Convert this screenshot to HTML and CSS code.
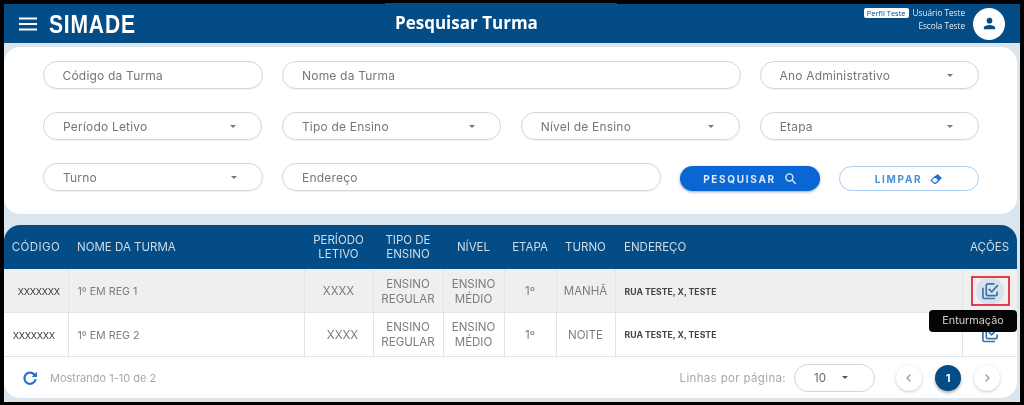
FILE: index.html
```html
<!DOCTYPE html>
<html lang="pt-BR">
<head>
<meta charset="utf-8">
<title>Pesquisar Turma</title>
<link rel="stylesheet" href="styles.css">
</head>
<body>
<div class="app">
  <header class="topbar">
    <div class="brand">
      <svg class="menu" viewBox="0 0 18 14"><path d="M0 1.5h18M0 7h18M0 12.5h18"/></svg>
      <span class="logo">SIMADE</span>
    </div>
    <h1 class="title">Pesquisar Turma</h1>
    <div class="user">
      <div class="user-text">
        <div class="user-line"><span class="badge">Perfil Teste</span><span>Usuário Teste</span></div>
        <div class="user-line">Escola Teste</div>
      </div>
      <div class="avatar">
        <svg viewBox="0 0 24 24"><path d="M12 12a4 4 0 1 0 0-8 4 4 0 0 0 0 8zm0 2c-2.7 0-8 1.3-8 4v2h16v-2c0-2.7-5.3-4-8-4z"/></svg>
      </div>
    </div>
  </header>

  <main class="content">
    <section class="filters">
      <div class="row row-a">
        <div class="field">Código da Turma</div>
        <div class="field">Nome da Turma</div>
        <div class="field">Ano Administrativo<i class="caret"></i></div>
      </div>
      <div class="row row-b">
        <div class="field">Período Letivo<i class="caret"></i></div>
        <div class="field">Tipo de Ensino<i class="caret"></i></div>
        <div class="field">Nível de Ensino<i class="caret"></i></div>
        <div class="field">Etapa<i class="caret"></i></div>
      </div>
      <div class="row row-c">
        <div class="field">Turno<i class="caret"></i></div>
        <div class="field">Endereço</div>
        <button class="btn btn-primary">PESQUISAR
          <svg viewBox="0 0 24 24"><circle cx="10" cy="10" r="6.5"/><path d="M15 15l6.5 6.5"/></svg>
        </button>
        <button class="btn btn-outline">LIMPAR
          <svg viewBox="0 0 24 24"><path class="eraser" d="M14 3.5l8 7.5-8.5 9-8-7.5z"/><path class="eraser-tip" d="M9.5 8L2 15.5l6.5 5.5h2l5.5-6z"/></svg>
        </button>
      </div>
    </section>

    <section class="results">
      <table class="grid">
        <colgroup>
          <col class="c-code"><col class="c-name"><col class="c-period"><col class="c-type">
          <col class="c-level"><col class="c-stage"><col class="c-shift"><col class="c-addr"><col class="c-act">
        </colgroup>
        <thead>
          <tr>
            <th>CÓDIGO</th>
            <th class="left">NOME DA TURMA</th>
            <th>PERÍODO<br>LETIVO</th>
            <th>TIPO DE<br>ENSINO</th>
            <th>NÍVEL</th>
            <th>ETAPA</th>
            <th>TURNO</th>
            <th class="left">ENDEREÇO</th>
            <th>AÇÕES</th>
          </tr>
        </thead>
        <tbody>
          <tr class="shaded">
            <td class="code">XXXXXXX</td>
            <td class="left">1º EM REG 1</td>
            <td>XXXX</td>
            <td>ENSINO<br>REGULAR</td>
            <td>ENSINO<br>MÉDIO</td>
            <td>1º</td>
            <td>MANHÃ</td>
            <td class="left addr">RUA TESTE, X, TESTE</td>
            <td class="actions">
              <span class="act-btn hovered">
                <svg viewBox="0 0 24 24"><path d="M3.5 8v11a2 2 0 0 0 2 2H18"/><path d="M20.5 12.5v3a2 2 0 0 1-2 2H9.5a2 2 0 0 1-2-2v-10a2 2 0 0 1 2-2h8"/><path d="M10.5 9.5l3.5 3.5 7.5-8"/></svg>
              </span>
              <span class="focus-box"></span>
              <span class="tooltip">Enturmação</span>
            </td>
          </tr>
          <tr>
            <td class="code shift-left">XXXXXXX</td>
            <td class="left">1º EM REG 2</td>
            <td class="shift-right">XXXX</td>
            <td>ENSINO<br>REGULAR</td>
            <td>ENSINO<br>MÉDIO</td>
            <td>1º</td>
            <td>NOITE</td>
            <td class="left addr">RUA TESTE, X, TESTE</td>
            <td class="actions">
              <span class="act-btn">
                <svg viewBox="0 0 24 24"><path d="M3.5 8v11a2 2 0 0 0 2 2H18"/><path d="M20.5 12.5v3a2 2 0 0 1-2 2H9.5a2 2 0 0 1-2-2v-10a2 2 0 0 1 2-2h8"/><path d="M10.5 9.5l3.5 3.5 7.5-8"/></svg>
              </span>
            </td>
          </tr>
        </tbody>
      </table>
      <footer class="pager">
        <div class="pager-left">
          <svg class="refresh" viewBox="0 0 24 24"><path d="M19.5 8A8.5 8.5 0 1 0 20.5 14"/><path class="fill" d="M22.5 2.5v8h-8z"/></svg>
          <span>Mostrando 1-10 de 2</span>
        </div>
        <div class="pager-right">
          <span>Linhas por página:</span>
          <div class="size">10<i class="caret dark"></i></div>
          <div class="pages">
            <span class="page nav"><svg viewBox="0 0 12 12"><path d="M7.5 2.5L4 6l3.5 3.5"/></svg></span>
            <span class="page current">1</span>
            <span class="page nav"><svg viewBox="0 0 12 12"><path d="M4.5 2.5L8 6l-3.5 3.5"/></svg></span>
          </div>
        </div>
      </footer>
    </section>
  </main>
</div>
</body>
</html>
```
FILE: styles.css
```css
* { box-sizing: border-box; }
html, body { margin: 0; height: 100%; }
body { background: #000; overflow: hidden; font-family: "Inter", "Liberation Sans", sans-serif; }

.app {
  width: 1016px;
  height: 398px;
  margin: 4px 0 0 4px;
  background: #dbe5ed;
  display: flex;
  flex-direction: column;
  filter: blur(0.6px);
}

/* top bar */
.topbar {
  height: 39px;
  flex: none;
  background: #034c85;
  color: #fff;
  display: flex;
  align-items: center;
  padding: 0 15px;
  position: relative;
}
.topbar::before {
  content: "";
  position: absolute;
  left: 381px;
  top: -1px;
  width: 232px;
  height: 1px;
  background: #034c85;
}
.brand { display: flex; align-items: center; width: 376px; flex: none; }
.menu { width: 18px; height: 14px; fill: none; stroke: #fff; stroke-width: 1.8; }
.logo {
  display: inline-block;
  margin-left: 12px;
  font: 700 26px/1 "Liberation Sans", sans-serif;
  letter-spacing: 1px;
  transform: scaleX(.81);
  transform-origin: left center;
}
.title {
  margin: 0 0 2px;
  font: 700 17px/1 "Open Sans", sans-serif;
  white-space: nowrap;
}
.user { margin-left: auto; display: flex; align-items: center; gap: 8px; }
.user-text { font: 400 8.2px/1 "Open Sans", sans-serif; text-align: right; color: #e6eef5; padding-bottom: 8px; }
.user-line { display: flex; justify-content: flex-end; align-items: center; gap: 4px; height: 13.5px; }
.badge {
  background: #fff;
  color: #034c85;
  padding: 1px 3px;
  border-radius: 2px;
  font-size: 7.5px;
  line-height: 8px;
}
.avatar {
  width: 32px;
  height: 32px;
  border-radius: 50%;
  background: #fff;
  display: flex;
  align-items: center;
  justify-content: center;
}
.avatar svg { width: 17px; height: 17px; fill: #034c85; }

/* content */
.content { flex: 1; display: flex; flex-direction: column; gap: 11px; padding-top: 4px; }

.filters {
  height: 167px;
  flex: none;
  margin-right: 3px;
  background: #fff;
  border-radius: 16px;
  padding: 14px 38px 0 39px;
  display: flex;
  flex-direction: column;
  gap: 23px;
}
.row { display: grid; column-gap: 19.5px; height: 28px; }
.row-a { grid-template-columns: 220px 458px 219px; }
.row-b { grid-template-columns: repeat(4, 1fr); }
.row-c { grid-template-columns: 220px 379px 140px 140px; column-gap: 19px; }

.field {
  border: 1px solid #d4d6d8;
  border-radius: 14px;
  box-shadow: 0 1px 1px rgba(0, 0, 0, .06);
  padding-left: 19px;
  padding-right: 25px;
  font-size: 12px;
  letter-spacing: .2px;
  color: #787674;
  display: flex;
  align-items: center;
  justify-content: space-between;
}
.row-a .field { margin-left: -0.5px; }
.caret {
  width: 0;
  height: 0;
  border-left: 3.5px solid transparent;
  border-right: 3.5px solid transparent;
  border-top: 3.5px solid #77787a;
}
.caret.dark { border-top-color: #555; }

.btn {
  height: 25px;
  margin-top: 3px;
  border-radius: 13px;
  display: flex;
  align-items: center;
  justify-content: center;
  gap: 8px;
  font: 700 10px/1 "Inter", sans-serif;
  letter-spacing: 1.7px;
  cursor: pointer;
}
.btn svg { width: 13px; height: 13px; }
.btn-primary { background: #0a66d2; color: #dce9f7; border: 0; box-shadow: 0 1px 3px rgba(3, 60, 130, .45); }
.btn-primary svg { fill: none; stroke: #dce9f7; stroke-width: 2.6; }
.btn-outline { background: #fff; color: #4a8fdc; border: 1px solid #a9cdf0; }
.eraser { fill: #1f6fd0; }
.eraser-tip { fill: #fff; stroke: #1f6fd0; stroke-width: 2; }

/* results */
.results {
  height: 173px;
  flex: none;
  margin-right: 3px;
  background: #fff;
  border-radius: 16px;
  position: relative;
}
.grid { width: 100%; border-collapse: collapse; table-layout: fixed; }
.c-code { width: 64px; }
.c-name { width: 236px; }
.c-period { width: 69px; }
.c-type { width: 70px; }
.c-level { width: 61px; }
.c-stage { width: 52px; }
.c-shift { width: 59px; }
.c-addr { width: 347px; }
.c-act { width: 55px; }

.grid th {
  height: 44px;
  background: #034c85;
  color: #cfdce8;
  font: 400 11.5px/14px "Inter", sans-serif;
  text-align: center;
  padding: 0;
}
.grid th:first-child { border-top-left-radius: 16px; letter-spacing: .4px; }
.grid th:last-child { border-top-right-radius: 16px; }
.grid th.left, .grid td.left { text-align: left; padding-left: 9px; }
.grid td {
  height: 43.5px;
  border-right: 1px solid #e3e4e5;
  border-bottom: 1px solid #e3e4e5;
  color: #7d7c7b;
  font: 400 11.5px/15px "Inter", sans-serif;
  text-align: center;
  padding: 2px 0 0;
}
.grid td:last-child { border-right: 0; padding-top: 0; }
.grid td.left:nth-child(2) { font-size: 10.7px; }
.shaded td { background: #efefef; }
.grid td.code { color: #333; font-size: 9.2px; letter-spacing: -.3px; padding-left: 6px; }
.grid td.code.shift-left { padding-left: 0; padding-right: 4px; }
.grid td.shift-right { padding-left: 8px; }
.grid td.addr { color: #444; font: 700 8.7px/14px "Inter", sans-serif; }

.actions { position: relative; }
.act-btn {
  width: 28px;
  height: 28px;
  border-radius: 50%;
  display: inline-flex;
  align-items: center;
  justify-content: center;
  vertical-align: middle;
  margin-left: 1px;
}
.act-btn.hovered { background: #d8e2ea; }
.act-btn svg { width: 20px; height: 20px; fill: none; stroke: #3a74a6; stroke-width: 2; }
.focus-box {
  position: absolute;
  left: 8px;
  top: 7px;
  width: 39px;
  height: 30px;
  border: 2px solid #e23d4c;
}
.tooltip {
  position: absolute;
  right: 0;
  top: 41px;
  width: 88px;
  height: 22px;
  background: #050505;
  color: #d0d0d0;
  border-radius: 4px;
  font: 400 10.8px/22px "Inter", sans-serif;
  text-align: center;
  z-index: 2;
}

/* footer */
.pager {
  height: 42px;
  display: flex;
  align-items: center;
  justify-content: space-between;
  padding: 0 17px 0 18px;
  color: #a8a8a8;
  font-size: 11px;
}
.pager-left { display: flex; align-items: center; gap: 12px; }
.refresh { width: 16px; height: 16px; fill: none; stroke: #2a72c9; stroke-width: 3.4; }
.refresh .fill { fill: #2a72c9; stroke: none; }
.pager-right { display: flex; align-items: center; }
.pager-right > span { font-size: 11.5px; letter-spacing: .35px; }
.size {
  width: 81px;
  height: 28px;
  margin-left: 8px;
  border: 1px solid #d4d6d8;
  border-radius: 14px;
  padding: 0 26px 0 19px;
  color: #666;
  font-size: 11.5px;
  display: flex;
  align-items: center;
  justify-content: space-between;
}
.pages { display: flex; align-items: center; gap: 13px; margin-left: 21px; }
.page {
  width: 26px;
  height: 26px;
  border-radius: 50%;
  display: flex;
  align-items: center;
  justify-content: center;
}
.page.nav { background: #fff; box-shadow: 0 1px 3px rgba(0, 0, 0, .22); }
.page.nav svg { width: 12px; height: 12px; fill: none; stroke: #9a9a9a; stroke-width: 1.3; }
.page.current { background: #034c85; color: #fff; font-weight: 700; font-size: 11px; box-shadow: 0 2px 3px rgba(0, 0, 0, .3); }
```
